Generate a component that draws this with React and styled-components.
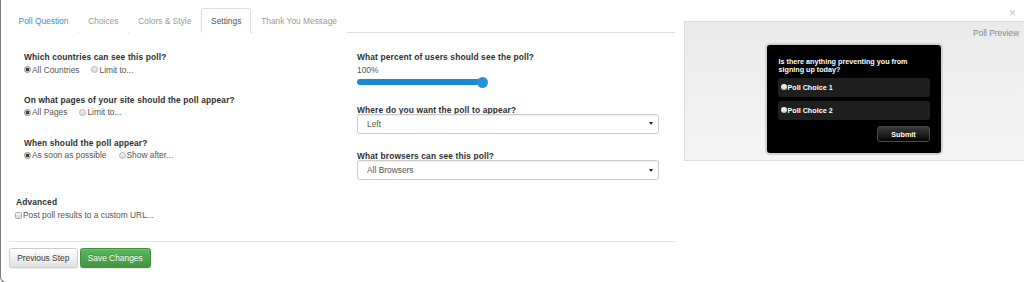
import React from 'react';
import styled, { createGlobalStyle } from 'styled-components';

const GlobalStyle = createGlobalStyle`
  html, body { margin: 0; padding: 0; background: #fff; overflow: hidden; }
  body {
    font-family: "Liberation Sans", Arial, Helvetica, sans-serif;
    font-size: 8.4px;
    color: #333;
  }
  * { box-sizing: border-box; }
`;

const Modal = styled.div`
  position: relative;
  width: 1024px;
  height: 283px;
  border-left: 1px solid #7d7d7d;
  border-bottom: 1px solid #7d7d7d;
  border-bottom-left-radius: 6px;
  padding: 8px 0 0 8px;
  display: flex;
  align-items: flex-start;
  gap: 9px;
  background: #fff;
`;

const Close = styled.span`
  position: absolute;
  top: 7px;
  right: 8px;
  font-size: 12px;
  line-height: 12px;
  color: #c4c4c4;
`;

const MainPanel = styled.div`
  width: 666px;
  display: flex;
  flex-direction: column;
`;

const Tabs = styled.ul`
  display: flex;
  margin: 0;
  padding: 0;
  list-style: none;
  border-bottom: 1px solid #ddd;
`;

const Tab = styled.li`
  margin-right: 0.6px;
  margin-bottom: -1px;
  padding: 6px 8.6px 5px;
  line-height: 12px;
  border: 1px solid ${p => (p.$active ? '#ddd' : 'transparent')};
  border-bottom-color: transparent;
  border-radius: 2.4px 2.4px 0 0;
  background: #fff;
  color: ${p => (p.$active ? '#555' : p.$link ? '#428bca' : '#999')};
`;

const Content = styled.div`
  padding-top: 18px;
`;

const Columns = styled.div`
  display: grid;
  grid-template-columns: 302px 302px;
  column-gap: 31px;
  padding-left: 15px;
`;

const Column = styled.div`
  display: flex;
  flex-direction: column;
`;

const Group = styled.div`
  display: flex;
  flex-direction: column;
  margin-bottom: ${p => p.$mb ?? 18.2}px;
  margin-top: ${p => p.$mt ?? 0}px;
`;

const Heading = styled.div`
  font-weight: bold;
  color: #2f2f2f;
  letter-spacing: 0.14px;
  line-height: ${p => p.$lh ?? 12}px;
`;

const Options = styled.div`
  display: flex;
  gap: 12px;
  margin-top: 0.6px;
  line-height: 12px;
  color: #555;
`;

const OptionLabel = styled.label`
  display: inline-flex;
  align-items: center;
`;

const Radio = styled.span`
  width: 7px;
  height: 7px;
  border-radius: 50%;
  border: 1px solid ${p => (p.$checked ? '#8a8a8a' : '#b4b4b4')};
  background: ${p =>
    p.$checked
      ? 'radial-gradient(circle, #3a3a3a 0 1.4px, #cfcfcf 1.9px)'
      : 'linear-gradient(#f2f2f2, #dcdcdc)'};
  margin-right: 1px;
  flex: none;
`;

const Checkbox = styled.span`
  width: 7px;
  height: 7px;
  border-radius: 1.5px;
  border: 1px solid #a8a8a8;
  background: linear-gradient(#f6f6f6, #dadada);
  margin-right: 1px;
  flex: none;
`;

const Value = styled.div`
  line-height: 12px;
  margin-top: 0.6px;
  color: #555;
`;

const SliderTrack = styled.div`
  position: relative;
  width: 125px;
  height: 6px;
  margin-top: 3.5px;
  margin-bottom: 2.5px;
  border-radius: 3px;
  background: #1a89d5;
`;

const SliderHandle = styled.span`
  position: absolute;
  right: -5.5px;
  top: -2.5px;
  width: 11px;
  height: 11px;
  border-radius: 50%;
  background: #2893dc;
`;

const Select = styled.div`
  display: flex;
  align-items: center;
  width: 302px;
  height: 19.5px;
  margin-top: -1px;
  padding: 0 5px 0 9px;
  border: 1px solid #ccc;
  border-radius: 2.4px;
  box-shadow: inset 0 1px 1px rgba(0, 0, 0, 0.075);
  color: #555;
  background: #fff;
`;

const Caret = styled.span`
  margin-left: auto;
  width: 0;
  height: 0;
  border-left: 2px solid transparent;
  border-right: 2px solid transparent;
  border-top: 3px solid #222;
`;

const Advanced = styled.div`
  display: flex;
  flex-direction: column;
  margin-top: 16px;
  padding-left: 7px;
`;

const CheckRow = styled.label`
  display: flex;
  align-items: center;
  margin-top: 1.5px;
  margin-left: -1px;
  line-height: 12px;
  color: #555;
`;

const Footer = styled.div`
  display: flex;
  gap: 2px;
  margin-top: 19.5px;
  padding-top: 6px;
  border-top: 1px solid #e5e5e5;
`;

const Button = styled.button`
  height: 20px;
  padding: 0 7.2px;
  font-family: inherit;
  font-size: 8.4px;
  border-radius: 2.4px;
  border: 1px solid ${p => (p.$primary ? '#3e8f3e' : '#ccc')};
  color: ${p => (p.$primary ? '#fff' : '#333')};
  background: ${p =>
    p.$primary
      ? 'linear-gradient(#5cb85c, #419641)'
      : 'linear-gradient(#ffffff, #e0e0e0)'};
  text-shadow: ${p => (p.$primary ? '0 -1px 0 rgba(0,0,0,.2)' : '0 1px 0 #fff')};
  box-shadow: inset 0 1px 0 rgba(255, 255, 255, 0.15), 0 1px 1px rgba(0, 0, 0, 0.075);
`;

const Preview = styled.div`
  flex: 1;
  margin-top: 12.5px;
  height: 140px;
  border: 1px solid #ddd;
  border-right: none;
  background: linear-gradient(#eaeaea, #f5f5f5);
  padding: 5px 5px 0 4px;
  display: flex;
  flex-direction: column;
  align-items: center;
`;

const PreviewTitle = styled.div`
  align-self: stretch;
  text-align: right;
  line-height: 12px;
  color: #888;
  margin-bottom: 4.5px;
`;

const Widget = styled.div`
  width: 178px;
  height: 112px;
  border: 2px solid #d2d2d2;
  border-radius: 5px;
  background: #000;
  padding: 12.8px 11px 0;
  font-size: 7.2px;
  font-weight: bold;
  color: #fff;
  display: flex;
  flex-direction: column;
`;

const Question = styled.div`
  line-height: 8.6px;
  margin-bottom: 3.4px;
  padding-left: 0.5px;
`;

const Choice = styled.div`
  display: flex;
  align-items: center;
  height: 19px;
  margin-bottom: 3.7px;
  padding-left: 3px;
  border-radius: 3px;
  background: #1f1f1f;
`;

const ChoiceDot = styled.span`
  width: 6px;
  height: 6px;
  border-radius: 50%;
  background: linear-gradient(#ffffff, #c8c8c8);
  margin-right: 0.5px;
  margin-top: -2px;
`;

const SubmitRow = styled.div`
  display: flex;
  justify-content: flex-end;
  margin-top: 2.3px;
`;

const Submit = styled.button`
  width: 53px;
  height: 16.3px;
  padding: 0;
  font-family: inherit;
  font-size: 7.2px;
  font-weight: bold;
  color: #fff;
  border: 1px solid #4a4a4a;
  border-radius: 3px;
  background: linear-gradient(#3a3a3a, #050505);
`;

const RadioOption = ({ checked, children }) => (
  <OptionLabel>
    <Radio $checked={checked} />
    {children}
  </OptionLabel>
);

const tabs = ['Poll Question', 'Choices', 'Colors & Style', 'Settings', 'Thank You Message'];

const leftGroups = [
  { q: 'Which countries can see this poll?', a: 'All Countries', b: 'Limit to...' },
  { q: 'On what pages of your site should the poll appear?', a: 'All Pages', b: 'Limit to...' },
  { q: 'When should the poll appear?', a: 'As soon as possible', b: 'Show after...' },
];

export default function App() {
  return (
    <>
      <GlobalStyle />
      <Modal>
        <Close>×</Close>
        <MainPanel>
          <Tabs>
            {tabs.map((t, i) => (
              <Tab key={t} $active={t === 'Settings'} $link={i === 0}>
                {t}
              </Tab>
            ))}
          </Tabs>
          <Content>
            <Columns>
              <Column>
                {leftGroups.map(g => (
                  <Group key={g.q}>
                    <Heading>{g.q}</Heading>
                    <Options>
                      <RadioOption checked>{g.a}</RadioOption>
                      <RadioOption>{g.b}</RadioOption>
                    </Options>
                  </Group>
                ))}
              </Column>
              <Column>
                <Group $mb={0}>
                  <Heading>What percent of users should see the poll?</Heading>
                  <Value>100%</Value>
                  <SliderTrack>
                    <SliderHandle />
                  </SliderTrack>
                </Group>
                <Group $mt={17.6} $mb={0}>
                  <Heading $lh={10}>Where do you want the poll to appear?</Heading>
                  <Select>
                    Left
                    <Caret />
                  </Select>
                </Group>
                <Group $mt={17.8} $mb={0}>
                  <Heading $lh={10}>What browsers can see this poll?</Heading>
                  <Select>
                    All Browsers
                    <Caret />
                  </Select>
                </Group>
              </Column>
            </Columns>
            <Advanced>
              <Heading>Advanced</Heading>
              <CheckRow>
                <Checkbox />
                Post poll results to a custom URL...
              </CheckRow>
            </Advanced>
          </Content>
          <Footer>
            <Button>Previous Step</Button>
            <Button $primary>Save Changes</Button>
          </Footer>
        </MainPanel>
        <Preview>
          <PreviewTitle>Poll Preview</PreviewTitle>
          <Widget>
            <Question>
              Is there anything preventing you from
              <br />
              signing up today?
            </Question>
            <Choice>
              <ChoiceDot />
              Poll Choice 1
            </Choice>
            <Choice>
              <ChoiceDot />
              Poll Choice 2
            </Choice>
            <SubmitRow>
              <Submit>Submit</Submit>
            </SubmitRow>
          </Widget>
        </Preview>
      </Modal>
    </>
  );
}
